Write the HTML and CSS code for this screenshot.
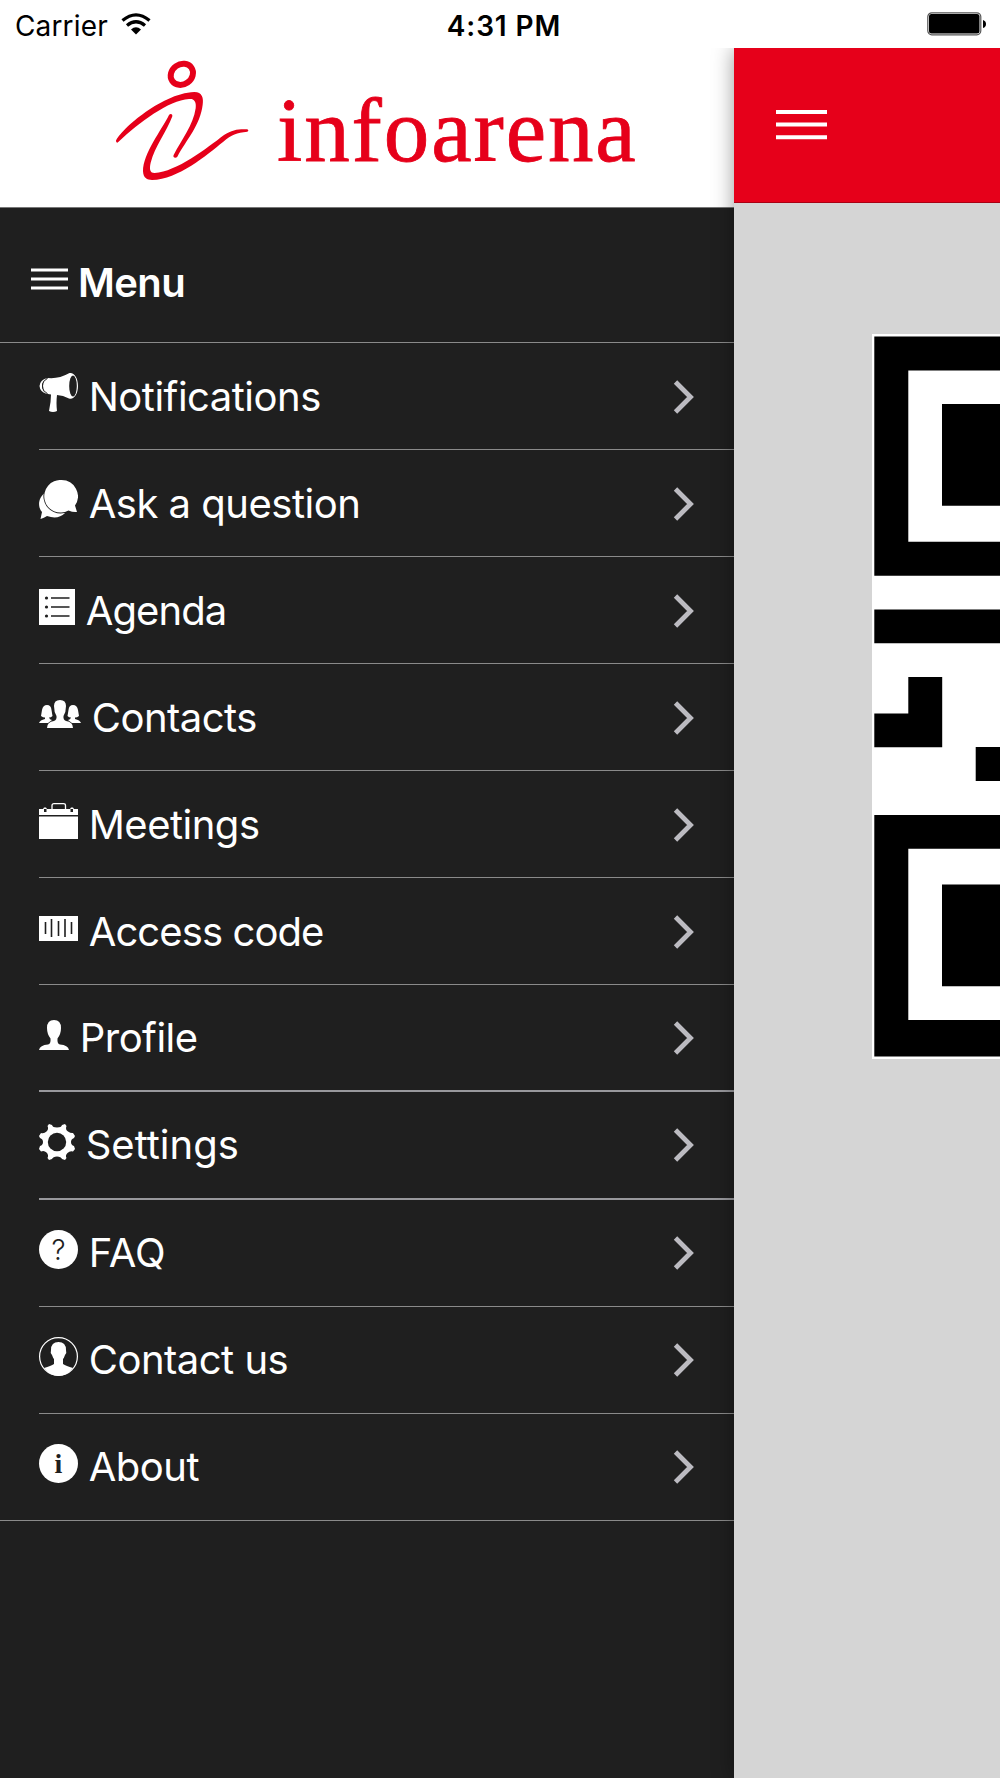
FILE: index.html
```html
<!DOCTYPE html>
<html lang="en">
<head>
  <meta charset="UTF-8">
  <title>infoarena - Menu</title>
  <link rel="stylesheet" href="styles.css">
</head>
<body>
  <div class="status-bar">
    <div class="carrier">
      <span>Carrier</span>
      <svg class="wifi" width="30" height="22" viewBox="0 0 30 22">
        <path d="M1.500 7.500Q15-3.800 28.500 7.500" fill="none" stroke="#000" stroke-width="3.300"/>
        <path d="M6 12.500Q15 5 24 12.500" fill="none" stroke="#000" stroke-width="3.300"/>
        <path d="M10 16.500Q15 12.200 20 16.500L15 21.500Z"/>
      </svg>
    </div>
    <div class="time">4:31 PM</div>
    <svg class="battery" width="60" height="24" viewBox="0 0 60 24">
      <rect x=".8" y=".8" width="53" height="22" rx="4" fill="#fff" stroke="#555" stroke-width="1.200"/>
      <rect x="2" y="2" width="50.500" height="19.500" rx="2.500"/>
      <path d="M56 8Q59 9 59 12T56 16Z"/>
    </svg>
  </div>

  <div class="screen">
    <div class="side-menu">
      <div class="logo">
        <svg class="logo-mark" width="135" height="122" viewBox="345 180 405 366">
          <ellipse cx="545.500" cy="223" rx="35" ry="30" fill="none" stroke="#e6001a" stroke-width="18" transform="rotate(-35 545.500 223)"/>
          <path d="M348 424C352 400 480 280 583 276C607 276 611 295 608 314C601 375 560 418 532 470C527 477 517 472 521 465C544 420 580 375 587 325C590 302 580 295 567 297C505 302 420 365 354 427Q350 430 348 424Z"/>
          <path d="M507 345C485 390 429 460 429 514C430 534 441 540 456 540C535 538 620 465 670 425C695 403 710 399 742 395Q748 392 742 388C715 387 697 389 672 405C620 445 530 515 464 519C447 519 449 502 452 488C464 440 500 395 517 349C518 340 510 340 507 345Z"/>
        </svg>
        <span class="logo-text">infoarena</span>
      </div>

      <div class="menu-title">
        <svg width="37" height="23" viewBox="0 0 37 23"><path d="M0 2h37M0 11h37M0 20h37" stroke="#fff" stroke-width="2.800"/></svg>
        <span>Menu</span>
      </div>

      <ul class="menu-list">
        <li class="menu-item">
          <svg class="icon" width="39" height="39" viewBox="0 0 39 39">
            <path d="M9 5Q20 6 30 .3C35-1 39 5 39 13S35 27 30 25.500Q24 22 18 22Q17 30 18 38Q14 40 10 38Q12 29 12 21.500L9 21Q4 20 4 13T9 5Z"/>
            <ellipse cx="34" cy="13" rx="3.800" ry="10.500" class="cut"/>
            <path d="M8 5Q1 7 .5 13Q1 19 8 21Q3 18 3 13T8 5Z"/>
            <path d="M8.500 5.500Q3.500 8 3.500 13T8.500 20.500" fill="none" stroke="#1f1f1f" stroke-width=".9"/>
          </svg>
          <span class="label">Notifications</span>
          <svg class="chevron" width="22" height="34" viewBox="0 0 22 34"><path d="M2.500 2l15 15L2.500 32"/></svg>
        </li>
        <li class="menu-item">
          <svg class="icon" width="39" height="39" viewBox="0 0 39 39">
            <path d="M7 12C-2 18-1 28 3 32L1.500 39Q5 38 8 36Q19 40 26 33Z"/>
            <path class="bubble" d="M22.500 0A16.300 16.300 0 1 0 29.500 30.500Q34 32.500 38 32L36 25.500A16.300 16.300 0 0 0 22.500 0Z"/>
          </svg>
          <span class="label">Ask a question</span>
          <svg class="chevron" width="22" height="34" viewBox="0 0 22 34"><path d="M2.500 2l15 15L2.500 32"/></svg>
        </li>
        <li class="menu-item">
          <svg class="icon" width="36" height="36" viewBox="0 0 36 36">
            <path d="M0 0h36v36H0z"/>
            <path d="M12 9h18.500M12 18h18.500M12 27h18.500" class="cut-line"/>
            <g class="cut"><circle cx="7.500" cy="9" r="1.600"/><circle cx="7.500" cy="18" r="1.600"/><circle cx="7.500" cy="27" r="1.600"/></g>
          </svg>
          <span class="label tight">Agenda</span>
          <svg class="chevron" width="22" height="34" viewBox="0 0 22 34"><path d="M2.500 2l15 15L2.500 32"/></svg>
        </li>
        <li class="menu-item">
          <svg class="icon" width="42" height="28" viewBox="0 0 42 28">
            <path d="M8 5Q12 5 12.500 10L13.500 16Q12 17.500 10 17.500Q10.500 19.500 13 20L9 23H0Q1 20 6 19V17.500Q4 17.500 2 16L3 10Q4 5 8 5Z"/>
            <path d="M34 5Q38 5 39 10L40 16Q38 17.500 36 17.500V19Q41 20 42 23H33L29 20Q31.500 19.500 32 17.500Q30 17.500 28.500 16L29.500 10Q30 5 34 5Z"/>
            <path d="M21 0Q27 0 27 6Q27 12 24.500 16Q24 20 27 21Q34 22 34 28H8Q8 22 15 21Q18 20 17.500 16Q15 12 15 6Q15 0 21 0Z"/>
          </svg>
          <span class="label">Contacts</span>
          <svg class="chevron" width="22" height="34" viewBox="0 0 22 34"><path d="M2.500 2l15 15L2.500 32"/></svg>
        </li>
        <li class="menu-item">
          <svg class="icon" width="39" height="36" viewBox="0 0 39 36">
            <path d="M0 6H4L5 4.500H7L8 6H31L32 4.500H34L35 6H39V12H0ZM0 13.500H39V36H0Z"/>
            <path d="M13 6V2.500Q13 .7 15 .7H24.500Q26.500 .7 26.500 2.500V6" fill="none" stroke="#fff" stroke-width="1.300"/>
            <path d="M5 6h2.500v3H5zM31.500 6H34v3h-2.500z" class="cut"/>
          </svg>
          <span class="label">Meetings</span>
          <svg class="chevron" width="22" height="34" viewBox="0 0 22 34"><path d="M2.500 2l15 15L2.500 32"/></svg>
        </li>
        <li class="menu-item">
          <svg class="icon" width="39" height="25" viewBox="0 0 39 25">
            <path d="M0 0h39v25H0z"/>
            <path d="M6.500 6v12M12.500 3v18M19.500 5v15M26 3v18M32.500 6v12" class="cut-line"/>
          </svg>
          <span class="label tight">Access code</span>
          <svg class="chevron" width="22" height="34" viewBox="0 0 22 34"><path d="M2.500 2l15 15L2.500 32"/></svg>
        </li>
        <li class="menu-item bright">
          <svg class="icon" width="30" height="30" viewBox="0 0 30 30">
            <path d="M15 0Q22 0 22 8Q22 14 18.500 18.500Q18 24 21 24.500Q29 25 30 30H0Q1 25 9 24.500Q12 24 11.500 18.500Q8 14 8 8Q8 0 15 0Z"/>
          </svg>
          <span class="label">Profile</span>
          <svg class="chevron" width="22" height="34" viewBox="0 0 22 34"><path d="M2.500 2l15 15L2.500 32"/></svg>
        </li>
        <li class="menu-item bright">
          <svg class="icon" width="36" height="36" viewBox="0 0 36 36">
            <path d="M10 0L13 1Q13.500 3.500 18 3.500T23 1L26 0L27.500 2Q26 5.500 29 7.500T34 9L36 12L35 14Q32 15 32 18T35 22L36 25L34 27.500Q31 26.500 28.500 29T27.500 34L26 36L23 35Q22 32.500 18 32.500T13 35L10 36L8.500 34Q10 31 7.500 28.500T2 27.500L0 25L1 22Q4 21 4 18T1 14L0 12L2 9Q5 10 7.500 7.500T8.500 2Z"/>
            <circle cx="18" cy="18" r="9.200" class="cut"/>
          </svg>
          <span class="label loose">Settings</span>
          <svg class="chevron" width="22" height="34" viewBox="0 0 22 34"><path d="M2.500 2l15 15L2.500 32"/></svg>
        </li>
        <li class="menu-item">
          <svg class="icon" width="39" height="39" viewBox="0 0 39 39">
            <circle cx="19.500" cy="19.500" r="19.500"/>
            <text x="19.500" y="29.500" class="glyph question">?</text>
          </svg>
          <span class="label loose">FAQ</span>
          <svg class="chevron" width="22" height="34" viewBox="0 0 22 34"><path d="M2.500 2l15 15L2.500 32"/></svg>
        </li>
        <li class="menu-item">
          <svg class="icon" width="39" height="39" viewBox="0 0 39 39">
            <circle cx="19.500" cy="19.500" r="18.900" fill="none" stroke="#fff" stroke-width="1.200"/>
            <path d="M19.500 5Q27 5 27 13Q28 16 26 18Q25 21 24 22V27Q27 29 34 31Q28 39 19.500 39T5 31Q12 29 15 27V22Q14 21 13 18Q11 16 12 13Q12 5 19.500 5Z"/>
          </svg>
          <span class="label">Contact us</span>
          <svg class="chevron" width="22" height="34" viewBox="0 0 22 34"><path d="M2.500 2l15 15L2.500 32"/></svg>
        </li>
        <li class="menu-item">
          <svg class="icon" width="39" height="39" viewBox="0 0 39 39">
            <circle cx="19.500" cy="19.500" r="19.500"/>
            <text x="19.500" y="29" class="glyph info">i</text>
          </svg>
          <span class="label">About</span>
          <svg class="chevron" width="22" height="34" viewBox="0 0 22 34"><path d="M2.500 2l15 15L2.500 32"/></svg>
        </li>
      </ul>
    </div>

    <div class="content">
      <div class="nav-bar">
        <svg width="51" height="32" viewBox="0 0 51 32"><path d="M0 3h51M0 15.500h51M0 28.300h51" stroke="#fff" stroke-width="4"/></svg>
      </div>
      <div class="code-area">
        <svg class="qr" width="128" height="725" viewBox="872 334 128 725">
          <path fill="#fff" d="M872 334h128v725H872z"/>
          <path d="M874.300 336.500H1000V370.500H908.300V541.700H1000V575.800H874.300Z"/>
          <path d="M942 404h58v101.800h-58zM874.300 609.500H1000v33.800H874.300z"/>
          <path d="M908.300 677h33.900v70.300H874.300V713.500h34z"/>
          <path d="M975.700 747h24.300v34h-24.300z"/>
          <path d="M874.300 815H1000v33.800H908.300V1020H1000v36.500H874.300Z"/>
          <path d="M942 884.500h58v101.700h-58z"/>
        </svg>
      </div>
    </div>
  </div>
</body>
</html>
```

FILE: styles.css
```css
* {
  box-sizing: border-box;
}
body {
  margin: 0;
  width: 1000px;
  height: 1778px;
  overflow: hidden;
  background: #fff;
  font-family: Inter, "Liberation Sans", sans-serif;
}
svg {
  display: block;
  flex: none;
}

/* status bar */
.status-bar {
  position: relative;
  z-index: 2;
  display: grid;
  grid-template-columns: 1fr auto 1fr;
  align-items: center;
  height: 48px;
  padding: 0 13px 0 15px;
  background: #fff;
  font-size: 28px;
  color: #000;
}
.carrier {
  display: flex;
  align-items: center;
  gap: 13px;
  padding-top: 3px;
  letter-spacing: 0.15px;
}
.wifi {
  margin-bottom: 4px;
}
.time {
  font-weight: 600;
  padding: 3px 0 0 6px;
  letter-spacing: 0.9px;
}
.battery {
  justify-self: end;
}

.screen {
  display: flex;
  height: 1730px;
}

/* side menu */
.side-menu {
  width: 734px;
  background: #1f1f1f;
  color: #fff;
}
.logo {
  display: flex;
  align-items: flex-start;
  gap: 27px;
  height: 160px;
  padding: 12px 0 0 115px;
  border-bottom: 1px solid #777;
  background: #fff;
}
.logo-mark {
  fill: #e6001a;
}
.logo-text {
  font-family: "Liberation Serif", serif;
  font-size: 91px;
  line-height: 100px;
  letter-spacing: 1.9px;
  margin-top: 21px;
  color: #e6001a;
  -webkit-text-stroke: 0.8px #e6001a;
}
.menu-title {
  display: flex;
  align-items: center;
  gap: 10px;
  height: 135px;
  padding: 16px 0 0 31px;
  border-bottom: 1px solid #8a8a8a;
  font-size: 40px;
  font-weight: 600;
  letter-spacing: -0.6px;
}
.menu-title span {
  margin-top: -2px;
}
.menu-title svg {
  margin-bottom: 7px;
}
.menu-list {
  list-style: none;
  margin: 0;
  padding: 0 0 0 39px;
  border-bottom: 1px solid #8a8a8a;
}
.menu-item {
  display: flex;
  align-items: center;
  height: 107.07px;
  padding-right: 39px;
  border-bottom: 1px solid #8a8a8a;
}
.menu-item:last-child {
  height: 106px;
  border-bottom: none;
}
.menu-item.bright {
  border-bottom: 2px solid #98989c;
}
.icon {
  fill: #fff;
  margin: 0 10.7px 6.5px 0;
}
.label {
  flex: 1;
  font-size: 40px;
  letter-spacing: -0.5px;
}
.label.tight {
  letter-spacing: -0.9px;
}
.label.loose {
  letter-spacing: 0;
}
.bubble {
  stroke: #1f1f1f;
  stroke-width: 1.6;
  paint-order: stroke;
}
.cut {
  fill: #1f1f1f;
}
.cut-line {
  fill: none;
  stroke: #1f1f1f;
  stroke-width: 1.6;
}
.glyph {
  fill: #1f1f1f;
  text-anchor: middle;
}
.question {
  font-size: 28px;
  font-weight: 300;
}
.info {
  font-family: "Liberation Serif", serif;
  font-size: 28px;
  font-weight: bold;
}
.chevron {
  margin-top: 1px;
}
.chevron path {
  fill: none;
  stroke: #bcbbc1;
  stroke-width: 4.8;
}

/* main page, pushed to the right */
.content {
  flex: 1;
  background: #d5d5d5;
  box-shadow: 0 0 20px rgba(0, 0, 0, 0.4);
}
.nav-bar {
  height: 155px;
  padding: 61px 0 0 42px;
  border-bottom: 1px solid #a80014;
  background: #e6001a;
}
.code-area {
  padding: 131px 0 0 138px;
}
```
